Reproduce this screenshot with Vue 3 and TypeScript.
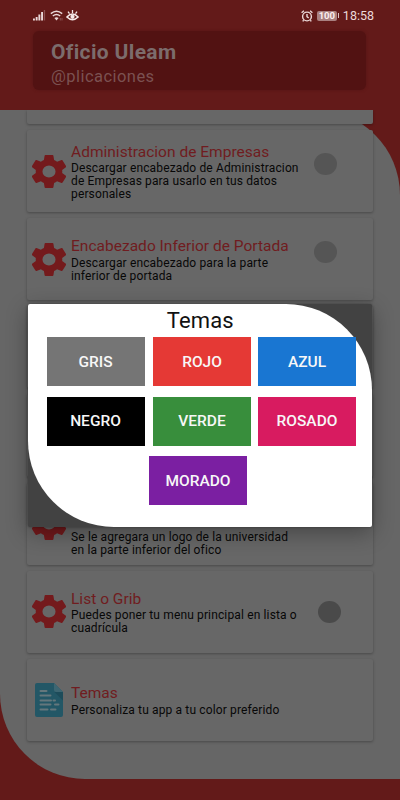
<script setup lang="ts">
interface Item {
  title: string
  lines: string[]
  icon: 'gear' | 'doc'
  toggle?: 'high' | 'mid'
  tall?: boolean
  key: string
}
interface Theme {
  label: string
  cls: string
}

const items: Item[] = [
  {
    key: 'empresas',
    title: 'Administracion de Empresas',
    lines: ['Descargar encabezado de Administracion', 'de Empresas para usarlo en tus datos', 'personales'],
    icon: 'gear',
    toggle: 'high',
  },
  {
    key: 'portada',
    title: 'Encabezado Inferior de Portada',
    lines: ['Descargar encabezado para la parte', 'inferior de portada'],
    icon: 'gear',
    toggle: 'high',
  },
  { key: 'e1', title: '', lines: [], icon: 'gear' },
  { key: 'e2', title: '', lines: [], icon: 'gear' },
  {
    key: 'logo',
    title: '',
    lines: ['Se le agregara un logo de la universidad', 'en la parte inferior del ofico'],
    icon: 'gear',
    tall: true,
  },
  {
    key: 'grid',
    title: 'List o Grib',
    lines: ['Puedes poner tu menu principal en lista o', 'cuadrícula'],
    icon: 'gear',
    toggle: 'mid',
  },
  { key: 'temas', title: 'Temas', lines: ['Personaliza tu app a tu color preferido'], icon: 'doc' },
]

const rows: Theme[][] = [
  [
    { label: 'GRIS', cls: 'gris' },
    { label: 'ROJO', cls: 'rojo' },
    { label: 'AZUL', cls: 'azul' },
  ],
  [
    { label: 'NEGRO', cls: 'negro' },
    { label: 'VERDE', cls: 'verde' },
    { label: 'ROSADO', cls: 'rosado' },
  ],
  [{ label: 'MORADO', cls: 'morado' }],
]
</script>

<template>
  <div class="screen">
    <div class="status">
      <div class="status-left">
        <svg class="signal" width="13" height="11" viewBox="0 0 13 11">
          <path d="M0 8.500h1.900V10.500H0zM2.700 7h1.900v3.500H2.700zM5.400 4.500h1.900v6H5.400zM8.100 2h1.900v8.500H8.100z" fill="#ead8d8" />
          <path d="M10.800 0h1.300v10.500h-1.300z" fill="#8b5151" />
        </svg>
        <svg class="wifi" width="13" height="11" viewBox="0 0 13 11" fill="none" stroke="#ead8d8">
          <path d="M.8 3.600Q6.500-1.200 12.200 3.600" stroke-width="1.400" />
          <path d="M2.800 6Q6.500 2.900 10.200 6" stroke-width="1.400" />
          <path d="M4.400 8.100Q6.500 6.500 8.600 8.100L6.500 10.500Z" fill="#ead8d8" stroke="none" />
          <path d="M10.300 8v2.500M12 8v2.500" stroke="#9b6868" stroke-width=".7" />
        </svg>
        <svg class="eye" width="13" height="12" viewBox="0 0 13 12" fill="none" stroke="#f5e9e9">
          <path d="M.9 7Q6.500.8 12.100 7Q6.500 12.400.9 7Z" stroke-width="1.500" />
          <circle cx="6.500" cy="6.800" r="2.100" fill="#f5e9e9" stroke="none" />
          <path d="M6.500 0v3M2 1.600l1.500 2M11 1.600l-1.500 2" stroke-width="1.300" />
        </svg>
      </div>
      <div class="status-right">
        <svg width="12" height="12" viewBox="0 0 12 12" fill="none" stroke="#ecd9d9" stroke-width="1.400">
          <circle cx="6" cy="6.500" r="4.400" />
          <path d="M6 4v2.700l1.700 1.200M.6 2.700L2.900.7M11.400 2.700L9.100.7M2.700 10.200l-1 1.200M9.300 10.200l1 1.200" />
        </svg>
        <span class="battery">100</span><span class="battery-tip"></span>
        <span class="clock">18:58</span>
      </div>
    </div>

    <header class="header">
      <div class="brand">
        <div class="brand-name">Oficio Uleam</div>
        <div class="brand-sub">@plicaciones</div>
      </div>
    </header>

    <main class="sheet">
      <div class="card card-cut"></div>
      <div v-for="item in items" :key="item.key" class="card">
        <div class="icon">
          <svg v-if="item.icon === 'gear'" width="34" height="33" viewBox="2.400 2 19.200 20" preserveAspectRatio="none" fill="#741a1c">
            <path d="M19.430 12.980c.04-.32.070-.64.070-.98s-.03-.66-.07-.98l2.110-1.650c.19-.15.240-.42.120-.64l-2-3.460c-.12-.22-.39-.3-.61-.22l-2.490 1c-.52-.4-1.080-.73-1.690-.98l-.38-2.650C14.460 2.180 14.250 2 14 2h-4c-.25 0-.46.180-.49.420l-.38 2.650c-.61.250-1.170.590-1.690.980l-2.490-1c-.23-.09-.49 0-.61.220l-2 3.460c-.13.220-.07.490.120.640l2.110 1.650c-.04.320-.07.650-.07.980s.03.660.070.980l-2.110 1.650c-.19.150-.24.420-.12.640l2 3.460c.12.220.390.300.610.220l2.490-1c.52.400 1.080.730 1.690.980l.38 2.650c.03.240.240.420.490.420h4c.25 0 .46-.18.490-.42l.38-2.650c.61-.25 1.170-.59 1.690-.98l2.490 1c.23.090.490 0 .61-.22l2-3.460c.12-.22.070-.49-.12-.64zM12 15.700a3.700 3.700 0 1 1 0-7.400a3.700 3.700 0 0 1 0 7.400z" />
          </svg>
          <svg v-else class="doc" width="28" height="34" viewBox="0 0 28 34">
            <path d="M2 0h17l9 9v23a2 2 0 0 1-2 2H2a2 2 0 0 1-2-2V2a2 2 0 0 1 2-2z" fill="#235766" />
            <path d="M19 0l9 9h-7a2 2 0 0 1-2-2z" fill="#3d6672" />
            <path d="M19.500 9H28v8.500z" fill="#1d4c5a" />
            <path d="M5.500 8h6M5.500 12.500h10M5.500 17.500h10.500M18.500 17.500h1.500M5.500 21.500h10M20 21.500h3.500M5.500 26.500h7M16 26.500h4.500" stroke="#64777c" stroke-width="2" stroke-linecap="round" />
          </svg>
        </div>
        <div class="text" :class="{ tall: item.tall }">
          <div class="title">{{ item.title }}</div>
          <div v-for="line in item.lines" :key="line" class="line">{{ line }}</div>
        </div>
        <span v-if="item.toggle" class="toggle" :class="item.toggle"></span>
      </div>
    </main>

    <div class="overlay">
      <div class="dialog">
        <div class="panel">
          <div class="heading">Temas</div>
          <div v-for="(row, i) in rows" :key="i" class="row" :class="{ single: row.length === 1 }">
            <button v-for="t in row" :key="t.label" type="button" class="btn" :class="t.cls">{{ t.label }}</button>
          </div>
        </div>
      </div>
    </div>
  </div>
</template>

<style>
body {
  margin: 0;
}
</style>

<style scoped>
.screen {
  position: relative;
  box-sizing: border-box;
  width: 400px;
  height: 800px;
  overflow: hidden;
  display: flex;
  flex-direction: column;
  background: #631a19;
  font-family: Roboto, sans-serif;
}
.status {
  box-sizing: border-box;
  height: 31px;
  padding: 0 26px 0 33px;
  display: flex;
  justify-content: space-between;
  align-items: center;
}
.status-left,
.status-right {
  display: flex;
  align-items: center;
}
.status-left {
  gap: 3.500px;
}
.status-right {
  color: #ecd9d9;
}
.battery {
  margin-left: 4px;
  width: 20px;
  height: 10px;
  border-radius: 2px;
  background: #a98080;
  color: #fbeeee;
  font-size: 9.500px;
  line-height: 10px;
  font-weight: 700;
  text-align: center;
}
.battery-tip {
  width: 1px;
  height: 5px;
  margin-left: 1px;
  background: #dcc3c3;
}
.clock {
  margin-left: 4px;
  font-size: 12.500px;
  line-height: 14px;
}
.header {
  box-sizing: border-box;
  height: 79px;
  padding: 0 34px 0 33px;
}
.brand {
  box-sizing: border-box;
  height: 59px;
  padding: 9px 18px 0;
  border-radius: 6px;
  background: #521212;
  box-shadow: 0 0 3px #541414;
}
.brand-name {
  color: #7c6c6c;
  font-size: 21px;
  line-height: 24px;
  font-weight: 700;
  letter-spacing: 0.350px;
  white-space: nowrap;
}
.brand-sub {
  color: #7b5151;
  font-size: 16.500px;
  line-height: 25px;
  letter-spacing: 0.450px;
  white-space: nowrap;
}
.sheet {
  box-sizing: border-box;
  height: 669px;
  padding: 0 27px;
  display: flex;
  flex-direction: column;
  gap: 6px;
  background: #666;
  border-radius: 0 85px 0 85px;
}
.card {
  box-sizing: border-box;
  height: 82.140px;
  flex: none;
  padding-left: 5px;
  border-radius: 2px;
  background: #676767;
  box-shadow: 0 1px 3px rgba(0, 0, 0, 0.300);
  display: flex;
  align-items: center;
}
.card-cut {
  height: 14px;
  border-radius: 0 0 2px 2px;
  clip-path: inset(0 -4px -4px -4px);
}
.icon {
  width: 34px;
  height: 34px;
  display: flex;
  justify-content: center;
  align-items: center;
}
.icon svg {
  flex: none;
}
.text {
  width: 243px;
  padding: 2px 0 0 5px;
}
.text.tall {
  padding-top: 22px;
}
.title {
  height: 19.500px;
  color: #701c20;
  font-size: 15.500px;
  line-height: 19px;
  letter-spacing: 0.020px;
  white-space: nowrap;
}
.line {
  color: #080808;
  font-size: 12px;
  line-height: 13.200px;
  letter-spacing: 0.140px;
  white-space: nowrap;
}
.toggle {
  width: 23px;
  height: 22px;
  border-radius: 50%;
}
.toggle.high {
  margin-bottom: 15px;
  background: #555;
}
.toggle.mid {
  margin-left: 4px;
  background: #4a4a4a;
}
.overlay {
  position: absolute;
  inset: 0;
  padding: 304px 28px 273px;
}
.dialog {
  height: 223px;
  border-radius: 2px;
  background: #424242;
  box-shadow: 0 6px 22px rgba(0, 0, 0, 0.330), 0 0 3px rgba(0, 0, 0, 0.350);
}
.panel {
  box-sizing: border-box;
  height: 223px;
  padding: 3px 16px 0 18.500px;
  border-radius: 2px 86px 2px 86px;
  background: #fff;
}
.heading {
  height: 30px;
  padding-right: 2px;
  color: #111;
  font-size: 22px;
  line-height: 27px;
  text-align: center;
  letter-spacing: 0.100px;
}
.row {
  display: flex;
  margin-bottom: 10.500px;
}
.single {
  padding-left: 102.500px;
}
.btn {
  width: 98px;
  height: 49px;
  margin-right: 8.500px;
  padding: 0;
  border: 0;
  color: #f7f7f7;
  font-family: Roboto, sans-serif;
  font-size: 15.500px;
  font-weight: 500;
  letter-spacing: 0;
}
.gris {
  background: #757575;
}
.rojo {
  background: #e53935;
}
.azul {
  background: #1976d2;
}
.negro {
  background: #000;
}
.verde {
  background: #388e3c;
}
.rojo,
.verde {
  margin-right: 7px;
}
.azul,
.rosado {
  margin-right: 0;
}
.rosado {
  background: #d81b60;
}
.morado {
  background: #7b1fa2;
}
</style>
